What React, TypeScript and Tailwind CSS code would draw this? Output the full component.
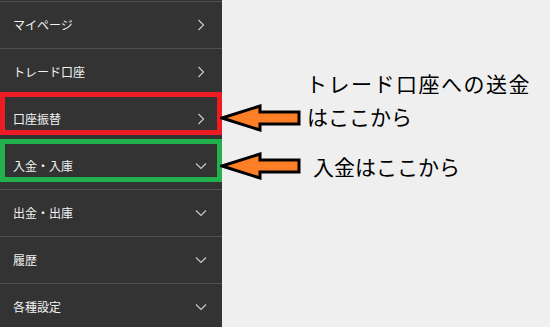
import React from 'react';

type Item = { label: string; open?: boolean };

const items: Item[] = [
  { label: 'マイページ' },
  { label: 'トレード口座' },
  { label: '口座振替' },
  { label: '入金・入庫', open: true },
  { label: '出金・出庫', open: true },
  { label: '履歴', open: true },
  { label: '各種設定', open: true },
];

const ChevronRight = () => (
  <svg width="8" height="12" viewBox="0 0 8 12" className="mr-[17px]">
    <path d="M1.5 1 L6.5 6 L1.5 11" fill="none" stroke="#c8c8c8" strokeWidth="1.2" />
  </svg>
);

const ChevronDown = () => (
  <svg width="12" height="8" viewBox="0 0 12 8" className="mr-[15px]">
    <path d="M1 1.5 L6 6.5 L11 1.5" fill="none" stroke="#c8c8c8" strokeWidth="1.2" />
  </svg>
);

// big orange arrow pointing left, like a hand-drawn paint annotation
const Arrow = ({ className }: { className: string }) => (
  <svg width="82" height="28" viewBox="0 0 82 28" className={className}>
    <polygon
      points="2,14 40,2 40,8 79,8 79,20 40,20 40,26"
      fill="#ff7f27"
      stroke="#000"
      strokeWidth="3"
      strokeLinejoin="miter"
    />
  </svg>
);

export default function App() {
  const font = { fontFamily: '"Noto Sans CJK JP", sans-serif' };

  return (
    <div className="relative w-[550px] h-[327px] overflow-hidden bg-[#efefef] flex" style={font}>
      <nav className="w-[222px] h-full bg-[#333333] pt-px shrink-0">
        {items.map(item => (
          <div key={item.label} className="h-[47px] border-t border-[#505050] flex items-center justify-between pl-[13px]">
            <span className="text-[12px] text-[#f2f2f2] leading-none">{item.label}</span>
            {item.open ? <ChevronDown /> : <ChevronRight />}
          </div>
        ))}
      </nav>

      <div className="flex-1 flex flex-col pt-[67px] text-[21px] leading-[33px] text-black">
        <div className="pl-[84px]">
          <div className="tracking-[1.5px]">トレード口座への送金</div>
          <div className="pl-px">はここから</div>
        </div>
        <div className="pl-[91px] mt-[17px]">入金はここから</div>
      </div>

      {/* annotation boxes and arrows drawn over the menu */}
      <div className="absolute left-0 top-[92px] w-[222px] h-[43px] border-[5px] border-[#ed1c24]" />
      <div className="absolute left-0 top-[139px] w-[222px] h-[43px] border-[5px] border-[#22b14c]" />
      <Arrow className="absolute left-[220px] top-[104px]" />
      <Arrow className="absolute left-[220px] top-[152px]" />
    </div>
  );
}
